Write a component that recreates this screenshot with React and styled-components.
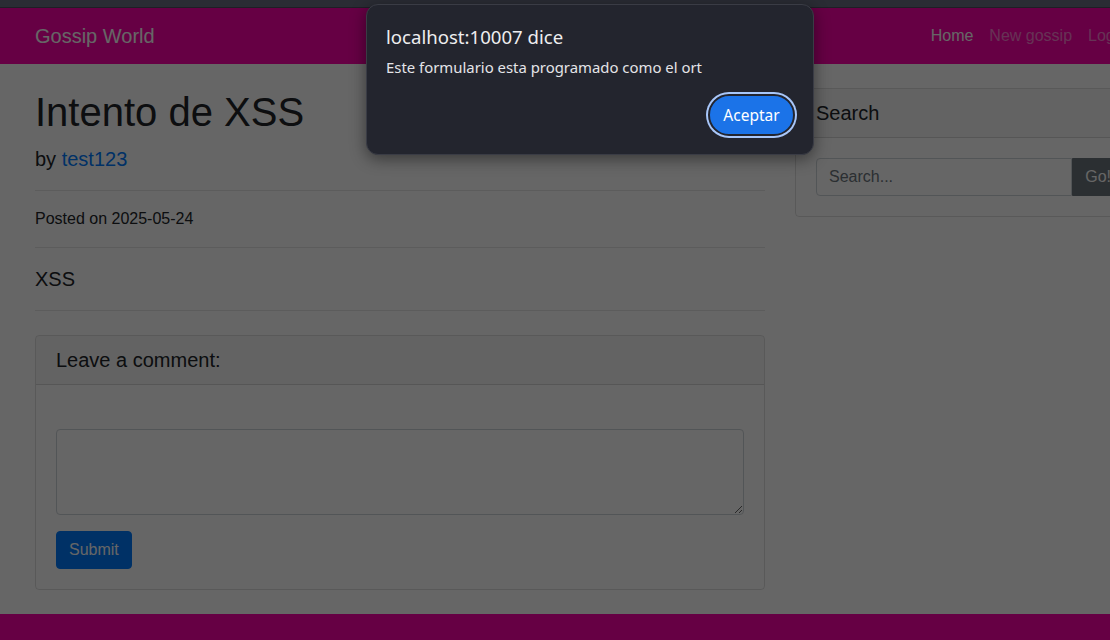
import React from "react";
import styled, { createGlobalStyle } from "styled-components";

const GlobalStyle = createGlobalStyle`
  *, *::before, *::after { box-sizing: border-box; }
  html, body { margin: 0; padding: 0; width: 1110px; height: 640px; overflow: hidden; }
  body {
    font-family: "Liberation Sans", Arial, sans-serif;
    font-size: 16px;
    line-height: 1.5;
    color: #212529;
    background: #ffffff;
  }
`;

const Shell = styled.div`
  position: relative;
  width: 1110px;
  height: 640px;
  overflow: hidden;
  display: flex;
  flex-direction: column;
  background: #2a2c34;
`;

const TopStrip = styled.div`
  height: 8px;
  flex: none;
  background: #2a2c34;
  border-bottom: 1px solid #1d1f25;
`;

const Page = styled.div`
  position: relative;
  flex: 1;
  display: flex;
  flex-direction: column;
  background: #ffffff;
  min-height: 0;
  overflow: hidden;
`;

const Container = styled.div`
  width: 1140px;
  margin-left: 20px;
  padding: 0 15px;
  flex: none;
`;

const Navbar = styled.nav`
  height: 56px;
  flex: none;
  background: #ff00aa;
  display: flex;
  align-items: center;
`;

const NavInner = styled(Container)`
  display: flex;
  align-items: center;
  justify-content: space-between;
`;

const Brand = styled.a`
  font-size: 20px;
  line-height: 30px;
  color: #ffffff;
  text-decoration: none;
`;

const NavList = styled.ul`
  list-style: none;
  margin: 0;
  padding: 0;
  display: flex;
`;

const NavLink = styled.a`
  display: block;
  padding: 8px;
  font-size: 16px;
  line-height: 24px;
  text-decoration: none;
  color: ${(p) => (p.$active ? "#ffffff" : "rgba(255,255,255,0.5)")};
`;

const Row = styled.div`
  display: flex;
  margin: 0 -15px;
`;

const Col = styled.div`
  flex: 0 0 ${(p) => p.$span};
  max-width: ${(p) => p.$span};
  padding: 0 15px;
`;

const Title = styled.h1`
  margin: 24px 0 8px;
  font-size: 40px;
  font-weight: 500;
  line-height: 1.2;
`;

const Lead = styled.p`
  margin: 0 0 16px;
  font-size: 20px;
  font-weight: 300;
  line-height: 1.5;
`;

const Text = styled.p`
  margin: 0 0 16px;
`;

const Link = styled.a`
  color: #007bff;
  text-decoration: none;
`;

const Rule = styled.hr`
  margin: 16px 0;
  border: 0;
  border-top: 1px solid rgba(0, 0, 0, 0.1);
`;

const Card = styled.div`
  margin: 24px 0;
  border: 1px solid rgba(0, 0, 0, 0.125);
  border-radius: 4px;
  display: flex;
  flex-direction: column;
`;

const CardHeader = styled.h5`
  margin: 0;
  padding: 12px 20px;
  font-size: 20px;
  font-weight: 500;
  line-height: 1.2;
  background: rgba(0, 0, 0, 0.03);
  border-bottom: 1px solid rgba(0, 0, 0, 0.125);
  border-radius: 3px 3px 0 0;
`;

const CardBody = styled.div`
  padding: ${(p) => p.$top || 20}px 20px 20px;
`;

const FormGroup = styled.div`
  margin-bottom: 16px;
`;

const TextArea = styled.textarea`
  display: block;
  width: 100%;
  height: 86px;
  padding: 6px 12px;
  font-family: inherit;
  font-size: 16px;
  line-height: 1.5;
  color: #495057;
  background: #ffffff;
  border: 1px solid #ced4da;
  border-radius: 4px;
  resize: vertical;
  outline: none;
`;

const Button = styled.button`
  display: inline-block;
  height: 38px;
  padding: 6px 12px;
  font-family: inherit;
  font-size: 16px;
  line-height: 1.5;
  color: #ffffff;
  background: ${(p) => (p.$variant === "secondary" ? "#6c757d" : "#007bff")};
  border: 1px solid ${(p) => (p.$variant === "secondary" ? "#6c757d" : "#007bff")};
  border-radius: ${(p) => (p.$attached ? "0 4px 4px 0" : "4px")};
  cursor: pointer;
`;

const InputGroup = styled.div`
  display: flex;
  align-items: stretch;
`;

const SearchInput = styled.input`
  flex: 1;
  min-width: 0;
  height: 38px;
  padding: 6px 12px;
  font-family: inherit;
  font-size: 16px;
  line-height: 1.5;
  color: #495057;
  border: 1px solid #ced4da;
  border-radius: 4px 0 0 4px;
  outline: none;
  &::placeholder { color: #6c757d; }
`;

const Footer = styled.footer`
  flex: 1;
  background: #ff00aa;
`;

const Dim = styled.div`
  position: absolute;
  inset: 0;
  background: rgba(0, 0, 0, 0.6);
`;

const Dialog = styled.div`
  position: absolute;
  left: 366px;
  top: 4px;
  width: 448px;
  height: 151px;
  padding: 20px 18px 18px 19px;
  background: #23252e;
  border: 1px solid #3a3c45;
  border-radius: 12px;
  box-shadow: 0 4px 16px rgba(0, 0, 0, 0.45);
  font-family: "Noto Sans", "Open Sans", sans-serif;
  color: #e6e6ea;
  display: flex;
  flex-direction: column;
`;

const DialogTitle = styled.div`
  font-size: 18.6px;
  line-height: 24px;
  color: #eeeef0;
`;

const DialogMessage = styled.div`
  margin-top: 8px;
  font-size: 14.9px;
  line-height: 20px;
  color: #e4e4e8;
`;

const DialogActions = styled.div`
  margin-top: auto;
  display: flex;
  justify-content: flex-end;
`;

const DialogButton = styled.button`
  width: 87px;
  height: 42px;
  padding: 0;
  border-radius: 21px;
  border: 2px solid #23252e;
  background: #1b73e8;
  box-shadow: 0 0 0 2px #a8c7fa;
  color: #ffffff;
  font-family: inherit;
  font-size: 15.5px;
  cursor: pointer;
`;

export default function App() {
  return (
    <>
      <GlobalStyle />
      <Shell>
        <TopStrip />
        <Page>
          <Navbar>
            <NavInner>
              <Brand href="#">Gossip World</Brand>
              <NavList>
                <li><NavLink $active href="#">Home</NavLink></li>
                <li><NavLink href="#">New gossip</NavLink></li>
                <li><NavLink href="#">Logout</NavLink></li>
              </NavList>
            </NavInner>
          </Navbar>
          <Container>
            <Row>
              <Col $span="66.6667%">
                <Title>Intento de XSS</Title>
                <Lead>
                  by <Link href="#">test123</Link>
                </Lead>
                <Rule />
                <Text>Posted on 2025-05-24</Text>
                <Rule />
                <Lead>XSS</Lead>
                <Rule />
                <Card>
                  <CardHeader>Leave a comment:</CardHeader>
                  <CardBody $top={44}>
                    <FormGroup>
                      <TextArea rows={3} />
                    </FormGroup>
                    <Button>Submit</Button>
                  </CardBody>
                </Card>
              </Col>
              <Col $span="33.3333%">
                <Card>
                  <CardHeader>Search</CardHeader>
                  <CardBody>
                    <InputGroup>
                      <SearchInput placeholder="Search..." />
                      <Button $variant="secondary" $attached>Go!</Button>
                    </InputGroup>
                  </CardBody>
                </Card>
              </Col>
            </Row>
          </Container>
          <Footer />
          <Dim />
        </Page>
        <Dialog>
          <DialogTitle>localhost:10007 dice</DialogTitle>
          <DialogMessage>Este formulario esta programado como el ort</DialogMessage>
          <DialogActions>
            <DialogButton>Aceptar</DialogButton>
          </DialogActions>
        </Dialog>
      </Shell>
    </>
  );
}
